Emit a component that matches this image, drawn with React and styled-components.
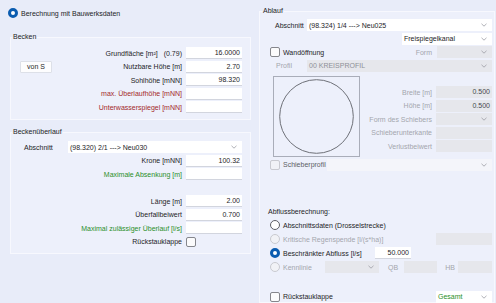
import React from "react";
import styled, { createGlobalStyle } from "styled-components";

const GlobalStyle = createGlobalStyle`
  * { box-sizing: border-box; }
  html, body { margin: 0; padding: 0; }
  body {
    width: 496px;
    height: 303px;
    overflow: hidden;
    background: #e8ecf9;
    font-family: "Liberation Sans", Arial, sans-serif;
    font-size: 7px;
    color: #1d1d1f;
  }
`;

const tones = {
  normal: "#1d1d1f",
  red: "#a3292a",
  green: "#2a8f2a",
  grey: "#a4a6ad",
  dim: "#5c5e66",
};

const OFF_BG = "#e6e7ec";

const Page = styled.div`
  display: flex;
  height: 303px;
`;

const LeftCol = styled.div`
  width: 259px;
  flex: none;
  padding: 8px 0 0 10px;
  display: flex;
  flex-direction: column;
`;

const RightCol = styled.div`
  flex: 1;
  padding-top: 7px;
`;

const Group = styled.fieldset`
  margin: ${(p) => p.$mt || 0}px 0 0 0;
  padding: 0;
  min-width: 0;
  width: ${(p) => p.$w}px;
  border: 1px solid #f7f8fe;
  background: #edf0fb;
  ${(p) => p.$h && `height: ${p.$h}px;`}
`;

const Legend = styled.legend`
  padding: 0 1px;
  margin-left: ${(p) => p.$lm || 1}px;
  line-height: 8px;
  font-size: 7px;
`;

const Body = styled.div`
  display: flex;
  flex-direction: column;
  gap: 1.5px;
  padding: ${(p) => p.$pad};
`;

const Row = styled.div`
  display: flex;
  align-items: center;
  justify-content: ${(p) => p.$justify || "flex-end"};
  height: 12px;
  gap: ${(p) => (p.$gap === undefined ? 4 : p.$gap)}px;
  margin-top: ${(p) => p.$mt || 0}px;
`;

const LabelGrid = styled.div`
  display: grid;
  grid-template-columns: ${(p) => p.$col}px 1fr;
  align-items: center;
  height: 12px;
`;

const Label = styled.span`
  white-space: nowrap;
  color: ${(p) => tones[p.$tone || "normal"]};
  padding-left: ${(p) => p.$pl || 0}px;
  margin-left: ${(p) => p.$ml || 0}px;
  ${(p) => p.$w && `width: ${p.$w}px; flex: none;`}
`;

const Note = styled.span`
  margin-left: 6px;
  white-space: nowrap;
`;

const Field = styled.div`
  flex: none;
  width: ${(p) => p.$w || 56}px;
  height: 12px;
  line-height: 11px;
  text-align: right;
  padding-right: 2px;
  background: ${(p) => (p.$off ? OFF_BG : "#ffffff")};
  border-bottom: 1px solid ${(p) => (p.$off ? OFF_BG : "#d2d5de")};
  color: ${(p) => (p.$off ? "#45474d" : "#1d1d1f")};
  margin-left: ${(p) => (p.$auto ? "auto" : "0")};
  margin-right: ${(p) => p.$mr || 0}px;
`;

const Select = styled.div`
  display: flex;
  align-items: center;
  justify-content: space-between;
  height: 12px;
  padding: 0 5px 0 2px;
  ${(p) => (p.$w ? `width: ${p.$w}px; flex: none;` : "flex: 1; min-width: 0;")}
  background: ${(p) => (p.$off ? OFF_BG : p.$soft ? "#f4f5fa" : "#ffffff")};
  color: ${(p) => (p.$green ? tones.green : p.$off ? "#8e9097" : tones.normal)};
  white-space: nowrap;
`;

const Button = styled.div`
  width: 32px;
  height: 12px;
  line-height: 10px;
  text-align: center;
  background: #fdfdfe;
  border: 1px solid #dde0e8;
  border-radius: 1px;
  margin-right: auto;
`;

const Radio = styled.span`
  flex: none;
  width: 10px;
  height: 10px;
  border-radius: 50%;
  background: ${(p) => (p.$off ? "#f1f2f6" : "#ffffff")};
  border: ${(p) =>
    p.$on ? "3px solid #0b5cb0" : p.$off ? "1px solid #c9cad0" : "1px solid #5e5f66"};
`;

const Check = styled.span`
  flex: none;
  width: 10px;
  height: 10px;
  border-radius: 2px;
  background: ${(p) => (p.$off ? "#f1f2f6" : "#fbfbfc")};
  border: 1px solid ${(p) => (p.$off ? "#c9cad0" : "#85868c")};
  margin-right: ${(p) => p.$mr || 0}px;
`;

const TopOption = styled.div`
  display: flex;
  align-items: center;
  gap: 3px;
  height: 10px;
  margin-left: -2px;
`;

const Spacer = styled.div`
  height: ${(p) => p.$h}px;
  flex: none;
`;

const Profile = styled.div`
  display: flex;
  margin-top: 3px;
`;

const Frame = styled.div`
  width: 87px;
  height: 81px;
  margin-left: 3px;
  border: 1px solid #a9adb9;
  display: flex;
  align-items: center;
  justify-content: center;
  flex: none;
`;

const SideFields = styled.div`
  flex: 1;
  display: flex;
  flex-direction: column;
  gap: 1.5px;
  padding-top: 10px;
`;

const Heading = styled.div`
  height: 10px;
  line-height: 10px;
  margin: 35px 0 0 -2px;
`;

const RadioList = styled.div`
  display: flex;
  flex-direction: column;
  gap: 2px;
  margin-top: 0.5px;
`;

const Chevron = () => (
  <svg width="6" height="4" viewBox="0 0 6 4">
    <polyline points="0.5,0.8 3,3.2 5.5,0.8" fill="none" stroke="#9a9ca3" strokeWidth="0.8" />
  </svg>
);

const Drop = ({ children, ...rest }) => (
  <Select {...rest}>
    <span>{children}</span>
    <Chevron />
  </Select>
);

function ValueRow({ label, tone, value, children }) {
  return (
    <Row>
      {children}
      <Label $tone={tone}>{label}</Label>
      <Field>{value}</Field>
    </Row>
  );
}

export default function App() {
  return (
    <>
      <GlobalStyle />
      <Page>
        <LeftCol>
          <TopOption>
            <Radio $on />
            <span>Berechnung mit Bauwerksdaten</span>
          </TopOption>

          <Group $w={241} $mt={15}>
            <Legend>Becken</Legend>
            <Body $pad="6px 8px 6px 9px">
              <Row $gap={0}>
                <Label>Grundfläche [m²]</Label>
                <Note>(0.79)</Note>
                <Field style={{ marginLeft: 4 }}>16.0000</Field>
              </Row>
              <ValueRow label="Nutzbare Höhe [m]" value="2.70">
                <Button>von S</Button>
              </ValueRow>
              <ValueRow label="Sohlhöhe [mNN]" value="98.320" />
              <ValueRow label="max. Überlaufhöhe [mNN]" tone="red" />
              <ValueRow label="Unterwasserspiegel [mNN]" tone="red" />
            </Body>
          </Group>

          <Group $w={241} $mt={8}>
            <Legend>Beckenüberlauf</Legend>
            <Body $pad="5px 8px 5px 9px">
              <LabelGrid $col={48}>
                <Label $pl={4}>Abschnitt</Label>
                <Drop>(98.320) 2/1 ---&gt; Neu030</Drop>
              </LabelGrid>
              <ValueRow label="Krone [mNN]" value="100.32" />
              <ValueRow label="Maximale Absenkung [m]" tone="green" />
              <Spacer $h={12} />
              <ValueRow label="Länge [m]" value="2.00" />
              <ValueRow label="Überfallbeiwert" value="0.700" />
              <ValueRow label="Maximal zulässiger Überlauf [l/s]" tone="green" />
              <Row>
                <Label>Rückstauklappe</Label>
                <Check $mr={46} />
              </Row>
            </Body>
          </Group>
        </LeftCol>

        <RightCol>
          <Group $w={236} $h={296}>
            <Legend $lm={2}>Ablauf</Legend>
            <Body $pad="4px 2px 0 10px">
              <LabelGrid $col={37}>
                <Label $pl={5}>Abschnitt</Label>
                <Drop>(98.324) 1/4 ---&gt; Neu025</Drop>
              </LabelGrid>
              <Row>
                <Drop $w={90}>Freispiegelkanal</Drop>
              </Row>
              <Row $justify="flex-start" $gap={3}>
                <Check />
                <Label>Wandöffnung</Label>
                <Label $tone="grey" style={{ marginLeft: "auto" }}>Form</Label>
                <Drop $w={55} $off style={{ marginLeft: 2 }} />
              </Row>
              <LabelGrid $col={37}>
                <Label $pl={6} $tone="grey">Profil</Label>
                <Drop $off>00 KREISPROFIL</Drop>
              </LabelGrid>

              <Profile>
                <Frame>
                  <svg width="77" height="77" viewBox="0 0 77 77">
                    <circle cx="38.5" cy="38.5" r="36.8" fill="none" stroke="#6e7078" strokeWidth="1" />
                  </svg>
                </Frame>
                <SideFields>
                  <Row>
                    <Label $tone="grey">Breite [m]</Label>
                    <Field $off>0.500</Field>
                  </Row>
                  <Row>
                    <Label $tone="grey">Höhe [m]</Label>
                    <Field $off>0.500</Field>
                  </Row>
                  <Row>
                    <Label $tone="grey">Form des Schiebers</Label>
                    <Drop $w={56} $off />
                  </Row>
                  <Row>
                    <Label $tone="grey">Schieberunterkante</Label>
                    <Field $off />
                  </Row>
                  <Row>
                    <Label $tone="grey">Verlustbeiwert</Label>
                    <Field $off />
                  </Row>
                </SideFields>
              </Profile>

              <Row $justify="flex-start" $gap={3}>
                <Check $off />
                <Label $tone="dim" $w={41}>Schieberprofil</Label>
                <Drop $soft />
              </Row>

              <Heading>Abflussberechnung:</Heading>
              <RadioList>
                <Row $justify="flex-start" $gap={3}>
                  <Radio />
                  <Label>Abschnittsdaten (Drosselstrecke)</Label>
                </Row>
                <Row $justify="flex-start" $gap={3}>
                  <Radio $off />
                  <Label $tone="grey">Kritische Regenspende [l/(s*ha)]</Label>
                  <Field $off $auto />
                </Row>
                <Row $justify="flex-start" $gap={3}>
                  <Radio $on />
                  <Label $w={89}>Beschränkter Abfluss [l/s]</Label>
                  <Field $w={36}>50.000</Field>
                </Row>
                <Row $justify="flex-start" $gap={0}>
                  <Radio $off />
                  <Label $tone="grey" $w={45} $pl={3}>Kennlinie</Label>
                  <Drop $w={54} $off />
                  <Label $tone="grey" $ml={9}>QB</Label>
                  <Field $off $w={33} style={{ marginLeft: 6 }} />
                  <Label $tone="grey" $ml={8}>HB</Label>
                  <Field $off $w={34} $auto />
                </Row>
              </RadioList>

              <Row $justify="flex-start" $gap={3} $mt={16}>
                <Check />
                <Label>Rückstauklappe</Label>
                <Drop $w={56} $green style={{ marginLeft: "auto" }}>Gesamt</Drop>
              </Row>
            </Body>
          </Group>
        </RightCol>
      </Page>
    </>
  );
}
